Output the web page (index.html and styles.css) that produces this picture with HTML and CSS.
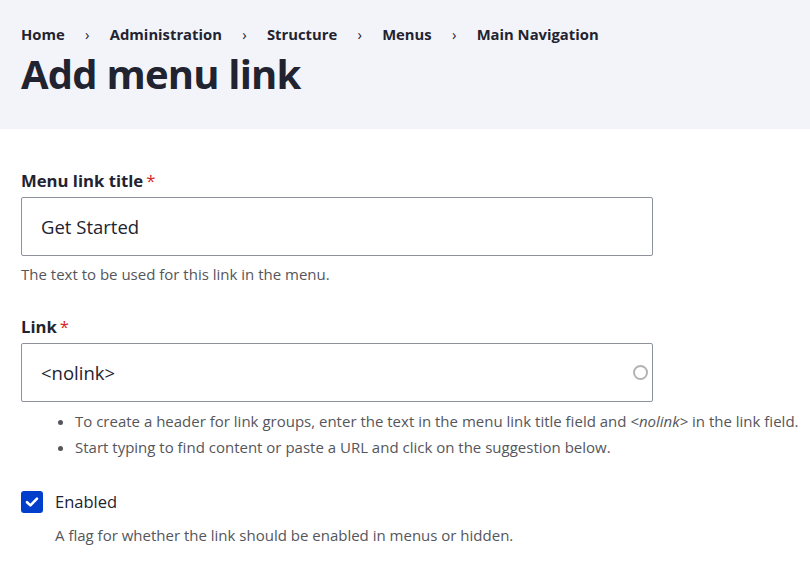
FILE: index.html
```html
<!DOCTYPE html>
<html lang="en">
<head>
<meta charset="utf-8">
<title>Add menu link</title>
<link rel="stylesheet" href="styles.css">
</head>
<body>
<header class="page-header">
  <nav class="breadcrumb">
    <a href="#">Home</a><span class="sep">›</span>
    <a href="#">Administration</a><span class="sep">›</span>
    <a href="#">Structure</a><span class="sep">›</span>
    <a href="#">Menus</a><span class="sep">›</span>
    <a href="#">Main Navigation</a>
  </nav>
  <h1 class="title">Add menu link</h1>
</header>
<main class="form">
  <div class="field">
    <label class="label">Menu link title<span class="req">*</span></label>
    <div class="input"><span class="value">Get Started</span></div>
    <div class="desc">The text to be used for this link in the menu.</div>
  </div>
  <div class="field field-link">
    <label class="label">Link<span class="req">*</span></label>
    <div class="input"><span class="value">&lt;nolink&gt;</span><span class="throbber"></span></div>
    <ul class="desc-list">
      <li>To create a header for link groups, enter the text in the menu link title field and <em>&lt;nolink&gt;</em> in the link field.</li>
      <li>Start typing to find content or paste a URL and click on the suggestion below.</li>
    </ul>
  </div>
  <div class="check">
    <span class="box"><svg viewBox="0 0 22 22" width="22" height="22"><path d="M6 11.2 L9.4 14.4 L16 7.6" fill="none" stroke="#fff" stroke-width="2.6" stroke-linecap="round" stroke-linejoin="round"/></svg></span>
    <span class="check-label">Enabled</span>
  </div>
  <div class="desc check-desc">A flag for whether the link should be enabled in menus or hidden.</div>
</main>
</body>
</html>
```

FILE: styles.css
```css
html, body {
  margin: 0;
  padding: 0;
  background: #fff;
  overflow: hidden;
}
body {
  font-family: "Open Sans", "Noto Sans", sans-serif;
  color: #222330;
}
.page-header {
  background: #f3f4f9;
  padding: 24px 21px 31px;
}
.breadcrumb {
  display: flex;
  align-items: center;
  font-size: 14.8px;
  line-height: 20px;
  font-weight: 700;
}
.breadcrumb a {
  color: #222330;
  text-decoration: none;
}
.breadcrumb .sep {
  width: 45px;
  text-align: center;
  font-weight: 400;
}
.title {
  margin: 6px 0 0;
  font-size: 40px;
  line-height: 48px;
  font-weight: 700;
  letter-spacing: -0.8px;
}
.form {
  padding: 42px 21px 0;
}
.field {
  display: flex;
  flex-direction: column;
}
.field-link {
  margin-top: 33px;
}
.label {
  font-size: 16.7px;
  line-height: 20px;
  font-weight: 700;
}
.req {
  color: #dc2323;
  margin-left: 3px;
  font-weight: 400;
}
.input {
  box-sizing: border-box;
  margin-top: 6px;
  width: 632px;
  height: 59px;
  border: 1px solid #8e929c;
  border-radius: 2px;
  display: flex;
  align-items: center;
  justify-content: space-between;
  padding: 0 4px 0 19px;
  font-size: 18.5px;
}
.throbber {
  box-sizing: border-box;
  width: 15px;
  height: 15px;
  border: 2.5px solid #b3b3b6;
  border-radius: 50%;
}
.desc {
  margin-top: 8px;
  font-size: 15px;
  line-height: 20px;
  color: #55565b;
}
.desc-list {
  margin: 9px 0 0;
  padding-left: 54px;
  font-size: 15px;
  line-height: 20px;
  color: #55565b;
  white-space: nowrap;
}
.desc-list li + li {
  margin-top: 6px;
}
.check {
  margin-top: 34px;
  display: flex;
  align-items: center;
  gap: 12px;
}
.box {
  width: 22px;
  height: 22px;
  border-radius: 3px;
  background: #003ecc;
  display: flex;
}
.check-label {
  font-size: 16.5px;
  line-height: 22px;
}
.check-desc {
  margin-top: 12px;
  padding-left: 34px;
}
```
